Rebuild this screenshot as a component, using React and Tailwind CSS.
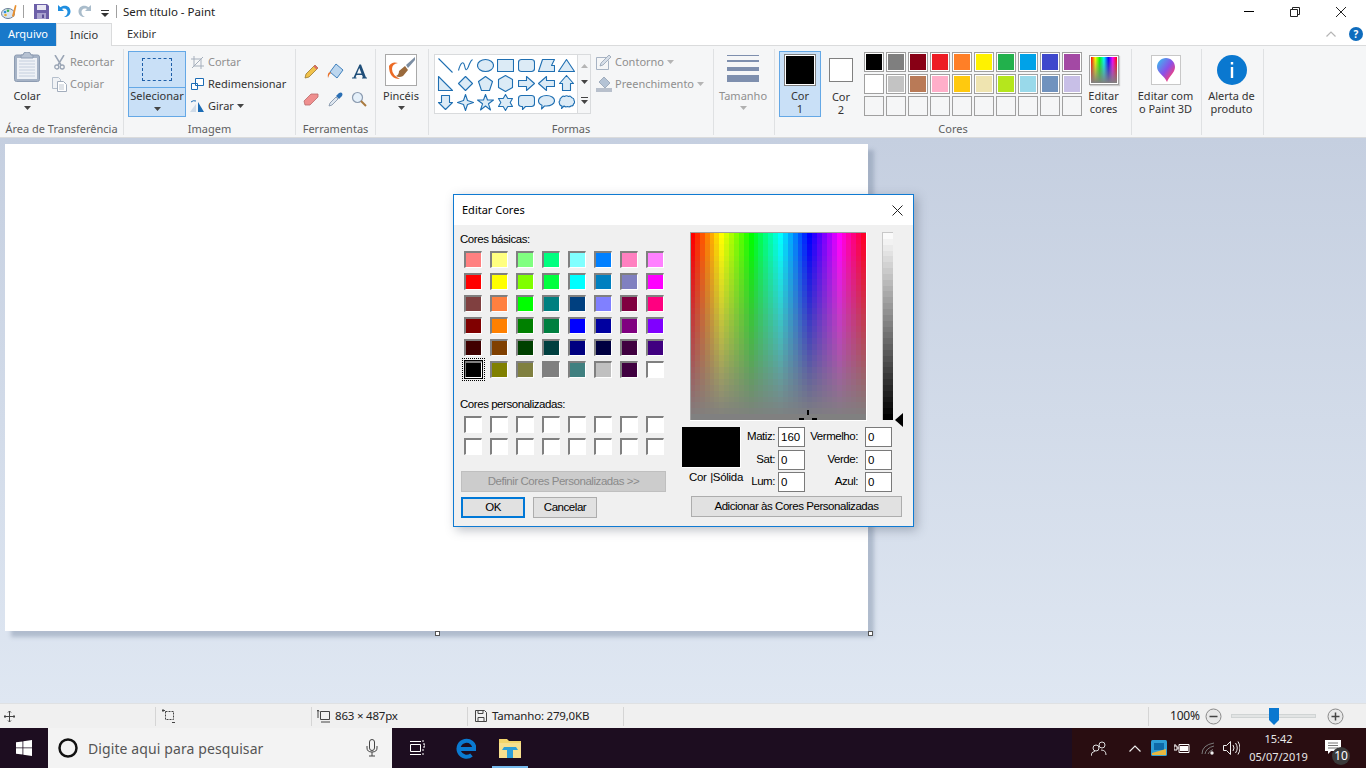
import React from "react";

const UI = "font-['Noto_Sans',sans-serif]";
const DLG = "font-['Liberation_Sans',sans-serif]";

const Arrow = ({ c = "#444", className = "" }) => (
  <svg width="7" height="4" viewBox="0 0 7 4" className={className}><path d="M0 0h7L3.5 4z" fill={c} /></svg>
);

function Group({ w, label, children, pl = 0 }) {
  return (
    <div className="flex shrink-0 h-full" style={{ width: w }}>
      <div className="flex-1 flex flex-col min-w-0" style={{ paddingLeft: pl }}>
        <div className="h-[76px] flex pt-[5px]">{children}</div>
        <div className="text-center text-[11px] leading-[14px] text-[#5f5f5f]">{label}</div>
      </div>
      <div className="w-px h-[86px] mt-[3px] bg-[#dfe1e3]" />
    </div>
  );
}

const SmallRow = ({ icon, text, dis, arrow }) => (
  <div className={`h-[22px] flex items-center gap-[3px] text-[11px] whitespace-nowrap ${dis ? "text-[#8f8f8f]" : "text-[#333]"}`}>
    <span className="w-[16px] h-[16px] flex items-center justify-center shrink-0">{icon}</span>
    <span>{text}</span>
    {arrow && <Arrow c={dis ? "#b5b5b5" : "#444"} />}
  </div>
);

const shapeDefs = [
  "M1 1L15 15",
  "M1 13C3 5 6 3 7 8S9 14 11 9 13 3 15 2",
  "M0 8a8 6 0 1 0 16 0a8 6 0 1 0-16 0z",
  "M0 2h16v12H0z",
  "M3 2h10q3 0 3 3v6q0 3-3 3H3q-3 0-3-3V5q0-3 3-3z",
  "M4 2h12l-3 6h3v6H0z",
  "M8 2l8 12H0z",
  "M1 1l14 14H1z",
  "M8 1l7 7-7 7-7-7z",
  "M8 1l7 5-3 9H4L1 6z",
  "M8 0l7 4v8l-7 4-7-4V4z",
  "M0 5h8V1l8 7-8 7v-4H0z",
  "M16 5H8V1L0 8l8 7v-4h8z",
  "M8 0l7 8h-3v7H4V8H1z",
  "M4 1h8v7h3l-7 7-7-7h3z",
  "M8 0l2 6 6 2-6 2-2 6-2-6-6-2 6-2z",
  "M8 0l2 5.5h6l-5 3.8 2 6.2-5-4-5 4 2-6.2-5-3.8h6z",
  "M8 0l2.3 4H15l-2.3 4 2.3 4h-4.7L8 16l-2.3-4H1l2.3-4L1 4h4.7z",
  "M3 1h10q3 0 3 3v5q0 3-3 3H7l-3 3v-3H3q-3 0-3-3V4q0-3 3-3z",
  "M8 1c4.5 0 8 2.2 8 5.2s-3.5 5.3-8 5.3H6l-3 3 .5-3.7C1.5 10 0 8.3 0 6.2 0 3.2 3.5 1 8 1z",
  "M3 3q1-2 3-1 2-1.5 4 0 2-1 3 1 3 1 2.5 3 1.5 2-.5 3.5 0 2-2.5 2-1.5 1.5-3.5.5-2 1-3.5-.5L3 14l.5-2.5Q1 11 1 9 0 7 1.5 6 1 4 3 3z",
];

function Gallery() {
  return (
    <div className="w-[157px] h-[60px] border border-[#d9dbdd] bg-white flex">
      <div className="w-[142px] grid grid-cols-7 grid-rows-3 py-[1px]">
        {shapeDefs.map((d, i) => (
          <div key={i} className="flex items-center justify-center">
            <svg width="17" height="17" viewBox="-0.5 -0.5 17 17">
              <path d={d} fill={i < 2 ? "none" : "#dcebf6"} stroke="#1f6fb2" strokeWidth="1.1" strokeLinejoin="round" />
            </svg>
          </div>
        ))}
      </div>
      <div className="flex-1 border-l border-[#d9dbdd] bg-[#f5f6f7] flex flex-col items-center justify-around py-[3px]">
        <svg width="7" height="4" viewBox="0 0 7 4"><path d="M0 4h7L3.5 0z" fill="#b5b5b5" /></svg>
        <Arrow c="#444" />
        <svg width="7" height="7" viewBox="0 0 7 7"><path d="M0 0h7v1H0zM0 3h7L3.5 7z" fill="#444" /></svg>
      </div>
    </div>
  );
}

const palette1 = ["#000000", "#7f7f7f", "#880015", "#ed1c24", "#ff7f27", "#fff200", "#22b14c", "#00a2e8", "#3f48cc", "#a349a4"];
const palette2 = ["#ffffff", "#c3c3c3", "#b97a57", "#ffaec9", "#ffc90e", "#efe4b0", "#b5e61d", "#99d9ea", "#7092be", "#c8bfe7"];

function Swatches() {
  const all = [...palette1, ...palette2, ...Array(10).fill(null)];
  return (
    <div className="grid grid-cols-[repeat(10,20px)] grid-rows-[repeat(3,20px)] gap-[2px]">
      {all.map((c, i) => (
        <div key={i} className={`border border-[#a0a0a0] ${c ? "p-px bg-white" : "bg-[#f5f6f7]"}`}>
          {c && <div className="w-full h-full" style={{ background: c }} />}
        </div>
      ))}
    </div>
  );
}

const basic = [
  "#ff8080", "#ffff80", "#80ff80", "#00ff80", "#80ffff", "#0080ff", "#ff80c0", "#ff80ff",
  "#ff0000", "#ffff00", "#80ff00", "#00ff40", "#00ffff", "#0080c0", "#8080c0", "#ff00ff",
  "#804040", "#ff8040", "#00ff00", "#008080", "#004080", "#8080ff", "#800040", "#ff0080",
  "#800000", "#ff8000", "#008000", "#008040", "#0000ff", "#0000a0", "#800080", "#8000ff",
  "#400000", "#804000", "#004000", "#004040", "#000080", "#000040", "#400040", "#400080",
  "#000000", "#808000", "#808040", "#808080", "#408080", "#c0c0c0", "#400040", "#ffffff",
];

const Well = ({ c, sel }) => (
  <div className="relative w-[18px] h-[17px] border-t-2 border-l-2 border-t-[#808080] border-l-[#808080] border-r border-b border-r-white border-b-white" style={{ background: c }}>
    {sel && <div className="absolute -inset-x-[4px] -top-[5px] -bottom-[4px] border border-dotted border-black" />}
    {sel && <div className="absolute -inset-x-[2px] -top-[3px] -bottom-[2px] border border-black" />}
  </div>
);

function Spectrum() {
  const cols = 36, rows = 32;
  const rects = [];
  for (let y = 0; y < rows; y++) {
    for (let x = 0; x < cols; x++) {
      const h = (x / cols) * 360;
      const s = 100 - (y / (rows - 1)) * 100;
      rects.push(<rect key={`${x}-${y}`} x={x * (176 / cols)} y={y * (188 / rows)} width={176 / cols + 0.5} height={188 / rows + 0.5} fill={`hsl(${h} ${s}% 50%)`} />);
    }
  }
  return (
    <svg width="176" height="188" viewBox="0 0 176 188" shapeRendering="crispEdges" className="block">
      {rects}
      <rect x="0" y="0" width="176" height="1" fill="#a0a0a0" />
      <rect x="0" y="0" width="1" height="188" fill="#a0a0a0" />
      <path d="M117 178h2v5h-2zM109 186h5v2h-5zM122 186h5v2h-5z" fill="#000" />
    </svg>
  );
}

function LumBar() {
  const n = 32;
  return (
    <div className="w-[11px] h-[188px] flex flex-col border border-[#c8c8c8] border-b-0 border-r-0">
      {Array.from({ length: n }).map((_, i) => {
        const v = Math.round(250 * (1 - i / (n - 1)));
        return <div key={i} className="flex-1" style={{ background: `rgb(${v},${v},${v})` }} />;
      })}
    </div>
  );
}

const Field = ({ label, value, w }) => (
  <div className="flex items-center h-[20px] justify-end">
    <span className="text-[11.5px] text-black mr-[3px] whitespace-nowrap tracking-[-0.45px]">{label}</span>
    <div className={`${w} h-[20px] border border-[#7a7a7a] bg-white text-[11.5px] leading-[18px] pl-[2px] text-black`}>{value}</div>
  </div>
);

const Btn = ({ children, className = "", dis }) => (
  <div className={`h-[21px] flex items-center justify-center text-[11.5px] tracking-[-0.45px] ${dis ? "bg-[#cccccc] border border-[#bfbfbf] text-[#8a8a8a]" : "bg-[#e1e1e1] border border-[#adadad] text-black"} ${className}`}>{children}</div>
);

function Dialog() {
  return (
    <div className={`absolute left-[453px] top-[194px] w-[461px] h-[333px] border border-[#0f7ad2] bg-[#f0f0f0] shadow-[3px_3px_10px_rgba(60,70,90,0.35)] ${DLG}`}>
      <div className="h-[30px] bg-white flex items-center justify-between pl-[8px] pr-[10px] text-[12px] text-black">
        <span className={`${UI} text-[11px]`}>Editar Cores</span>
        <svg width="11" height="11" viewBox="0 0 11 11"><path d="M.5.5l10 10M10.5.5l-10 10" stroke="#222" strokeWidth="1" /></svg>
      </div>
      <div className="flex pl-[6px] pt-[7px]">
        <div className="w-[222px]">
          <div className="text-[11.5px] leading-[14px] text-black tracking-[-0.45px]">Cores básicas:</div>
          <div className="grid grid-cols-[repeat(8,18px)] auto-rows-[17px] gap-x-[8px] gap-y-[5px] pl-[4px] mt-[5px]">
            {basic.map((c, i) => <Well key={i} c={c} sel={i === 40} />)}
          </div>
          <div className="text-[11.5px] leading-[14px] text-black mt-[19px] tracking-[-0.45px]">Cores personalizadas:</div>
          <div className="grid grid-cols-[repeat(8,18px)] auto-rows-[17px] gap-x-[8px] gap-y-[5px] pl-[4px] mt-[5px]">
            {Array.from({ length: 16 }).map((_, i) => <Well key={i} c="#ffffff" />)}
          </div>
          <Btn dis className="w-[205px] ml-[1px] mt-[16px]">Definir Cores Personalizadas &gt;&gt;</Btn>
          <div className="flex gap-[8px] ml-[1px] mt-[5px]">
            <Btn className="w-[64px] !border-2 !border-[#0078d7]">OK</Btn>
            <Btn className="w-[64px]">Cancelar</Btn>
          </div>
        </div>
        <div className="w-[220px]">
          <div className="flex ml-[8px] h-[189px]">
            <div className="border-r border-b border-white w-[177px] h-[189px]"><Spectrum /></div>
            <div className="ml-[15px]"><LumBar /></div>
            <svg width="8" height="14" viewBox="0 0 8 14" className="ml-[2px] mt-[181px] shrink-0"><path d="M8 0v14L0 7z" fill="#000" /></svg>
          </div>
          <div className="flex mt-[6px]">
            <div className="w-[59px]">
              <div className="w-[59px] h-[41px] bg-black border-r border-b border-white" />
              <div className="text-[11.5px] leading-[14px] text-black mt-[2px] flex justify-between pl-[7px] whitespace-nowrap tracking-[-0.3px]"><span>Cor</span><span className="mr-[-2px]">|Sólida</span></div>
            </div>
            <div className="w-[64px] flex flex-col gap-[2.5px]">
              <Field label="Matiz:" value="160" w="w-[27px]" />
              <Field label="Sat:" value="0" w="w-[27px]" />
              <Field label="Lum:" value="0" w="w-[27px]" />
            </div>
            <div className="w-[87px] flex flex-col gap-[2.5px]">
              <Field label="Vermelho:" value="0" w="w-[27px] ml-[4px]" />
              <Field label="Verde:" value="0" w="w-[27px] ml-[4px]" />
              <Field label="Azul:" value="0" w="w-[27px] ml-[4px]" />
            </div>
          </div>
          <Btn className="w-[211px] ml-[9px] mt-[4px]">Adicionar às Cores Personalizadas</Btn>
        </div>
      </div>
    </div>
  );
}

const Handle = ({ className }) => <div className={`absolute w-[5px] h-[5px] border border-[#555] bg-white ${className}`} />;

const TitleBar = () => (
  <div className="h-[23px] bg-white flex items-center text-[11.5px] text-[#222]">
    <svg width="16" height="16" viewBox="0 0 16 16" className="ml-[1px]">
      <ellipse cx="7" cy="9.5" rx="6.5" ry="5" fill="#d8e4f0" stroke="#6b7f99" />
      <circle cx="4" cy="8" r="1.3" fill="#2f8fd8" /><circle cx="7" cy="6.8" r="1.3" fill="#3fb24f" /><circle cx="4.5" cy="11" r="1.3" fill="#e8b030" />
      <path d="M11 12L14 1l1.5.5L13 13z" fill="#e89030" />
    </svg>
    <div className="w-px h-[13px] bg-[#a0a0a0] ml-[6px]" />
    <svg width="15" height="15" viewBox="0 0 15 15" className="ml-[10px]">
      <path d="M0 0h13l2 2v13H0z" fill="#6c5fa8" /><path d="M3 1h9v5H3z" fill="#e8e6f2" /><path d="M3 9h9v6H3z" fill="#a9a2cf" /><path d="M8 10.5h2V14H8z" fill="#5b4f96" />
    </svg>
    <svg width="14" height="15" viewBox="0 0 14 15" className="ml-[8px]">
      <path d="M1 1v6h6L5 5c3-1.5 6 .5 5.5 3.5-.3 2-1.5 3.5-3.5 4.5 4 .5 6.5-2.5 6.5-5.5C13.500 3 9 0 3.500 3.200z" fill="#1f8ee0" />
    </svg>
    <svg width="14" height="15" viewBox="0 0 14 15" className="ml-[7px]">
      <path d="M13 1v6H7l2-2C6 3.500 3 5.500 3.500 8.500c.3 2 1.500 3.500 3.500 4.500C3 13.500.5 10.500.5 7.500.5 3 5 0 10.500 3.200z" fill="#a9bccb" />
    </svg>
    <svg width="8" height="8" viewBox="0 0 8 8" className="ml-[9px] mt-[3px]"><path d="M0 1h8v1H0zM0 4h8L4 8z" fill="#333" /></svg>
    <div className="w-px h-[13px] bg-[#a0a0a0] ml-[7px]" />
    <span className="ml-[7px] -translate-x-px">Sem título - Paint</span>
    <div className="ml-auto flex items-center">
      <div className="w-[10px] h-px bg-black mr-[36px]" />
      <svg width="10" height="10" viewBox="0 0 10 10" className="mr-[36px]"><path d="M.5 2.5h7v7h-7zM2.5 2.5v-2h7v7h-2" fill="none" stroke="#222" /></svg>
      <svg width="10" height="10" viewBox="0 0 10 10" className="mr-[20px]"><path d="M0 0l10 10M10 0L0 10" stroke="#222" /></svg>
    </div>
  </div>
);

const Tabs = () => (
  <div className="h-[23px] bg-white flex text-[11px] relative border-b border-[#dadbdc]">
    <div className="w-[56px] h-[23px] bg-[#1979ca] text-white flex items-center justify-center">Arquivo</div>
    <div className="w-[56px] h-[23px] bg-[#f5f6f7] border border-b-0 border-[#dadbdc] text-[#333] flex items-center justify-center">Início</div>
    <div className="ml-[15px] flex items-center text-[#333]">Exibir</div>
    <div className="ml-auto flex items-center pr-[3px]">
      <svg width="10" height="6" viewBox="0 0 10 6" className="mr-[13px]"><path d="M.5 5.500L5 1l4.500 4.500" fill="none" stroke="#b5b5b5" strokeWidth="1.2" /></svg>
      <div className="w-[14px] h-[14px] rounded-full bg-[#0f6cbd] text-white text-[10px] font-bold leading-[14px] text-center">?</div>
    </div>
  </div>
);

const Ribbon = () => (
  <div className="h-[92px] bg-[#f5f6f7] border-b border-[#dadbdc] flex text-[#333]">
    <Group w={124} label="Área de Transferência">
      <div className="w-[54px] -mr-[3px] flex flex-col items-center">
        <svg width="26" height="30" viewBox="0 0 26 30" className="mt-[1px]">
          <rect x="0.5" y="3" width="25" height="26.5" rx="2" fill="#a6b3c6" stroke="#8d9cb2" />
          <rect x="3" y="6" width="20" height="21" fill="#eef1f6" />
          <path d="M5 9h16M5 12h16M5 15h16M5 18h16M5 21h16M5 24h16" stroke="#c4cedd" />
          <path d="M9 3q0-3 4-3t4 3h2v3H7V3z" fill="#b6c1d1" stroke="#8d9cb2" />
        </svg>
        <div className="text-[11px] leading-[14px] mt-[7px]">Colar</div>
        <Arrow className="mt-[3px]" />
      </div>
      <div className="flex flex-col">
        <SmallRow dis text="Recortar" icon={<svg width="11" height="15" viewBox="0 0 11 15"><path d="M1 0l6 10M10 0L4 10" stroke="#9aa5b5" strokeWidth="1.5" /><circle cx="2.8" cy="12" r="2" fill="none" stroke="#9aa5b5" strokeWidth="1.3" /><circle cx="8.2" cy="12" r="2" fill="none" stroke="#9aa5b5" strokeWidth="1.3" /></svg>} />
        <SmallRow dis text="Copiar" icon={<svg width="15" height="15" viewBox="0 0 15 15"><path d="M.5.5h6l2 2v9h-8z" fill="#f0f2f5" stroke="#b5bfcc" /><path d="M5.5 4.5h6l3 3v7h-9z" fill="#fff" stroke="#a2adbc" /><path d="M7 8h5M7 10h5M7 12h5" stroke="#c0c8d2" /></svg>} />
      </div>
    </Group>
    <Group w={172} label="Imagem">
      <div className="w-[58px] h-[66px] ml-[4px] border border-[#64a8e6] bg-[#c9e0f7] flex flex-col items-center">
        <div className="h-[36px] w-full border-b border-[#64a8e6] flex items-center justify-center">
          <div className="w-[30px] h-[23px] border border-dashed border-[#1e5ea8] mt-[-1px]" />
        </div>
        <div className="text-[11px] leading-[14px] mt-[1px] whitespace-nowrap">Selecionar</div>
        <Arrow className="mt-[4px]" />
      </div>
      <div className="flex flex-col ml-[3px]">
        <SmallRow dis text="Cortar" icon={<svg width="13" height="13" viewBox="0 0 13 13"><path d="M3 0v10h10M0 3h10v10M1 12L12 1" fill="none" stroke="#a5afbc" /></svg>} />
        <SmallRow text="Redimensionar" icon={<svg width="13" height="12" viewBox="0 0 13 12"><path d="M4.5.5h8v7h-8zM.5 5.5h6v6h-6z" fill="#fff" stroke="#1c6cb5" /></svg>} />
        <SmallRow arrow text="Girar" icon={<svg width="16" height="14" viewBox="0 0 16 14"><path d="M9 3l6 10H9z" fill="#1c6cb5" /><path d="M7 5v8H1z" fill="#cfdbe8" /><path d="M2 3q2-2 5-1" fill="none" stroke="#1c6cb5" /></svg>} />
      </div>
    </Group>
    <Group w={80} label="Ferramentas">
      <div className="grid grid-cols-[repeat(3,24px)] grid-rows-[28px_28px] place-items-center ml-[3px] mt-[6px]">
        <svg width="15" height="15" viewBox="0 0 15 15"><path d="M1 14l1-4L11 1l3 3-9 9z" fill="#f1c24b" stroke="#9b7a2f" strokeWidth=".8" /><path d="M11 1l3 3-1.5 1.5-3-3z" fill="#d96a6a" /></svg>
        <svg width="17" height="17" viewBox="0 0 17 17"><path d="M9 1l7 6-6 8-7-6z" fill="#bcd6ee" stroke="#3f80bd" /><path d="M3 9Q0 10 1 15q1-4 3-5z" fill="#e8702a" /></svg>
        <svg width="15" height="15" viewBox="0 0 15 15"><path d="M0 14.5h4.5v-1H3.5L4.5 11h5.500l1 2.500H10v1h5v-1h-1L9 .5H7.500L1.500 13.500H0zM5 9.500L7.300 4l2.200 5.500z" fill="#1f4e79" /></svg>
        <svg width="16" height="13" viewBox="0 0 16 13"><path d="M1 8l7-7h7v3l-8 8H2z" fill="#ef8f8f" stroke="#b96a6a" strokeWidth=".8" /></svg>
        <svg width="15" height="15" viewBox="0 0 15 15"><path d="M1 14l1-3 6-6 2 2-6 6z" fill="#dfe7f0" stroke="#7b8ea5" strokeWidth=".8" /><path d="M8 4l3-3q2-1 3 0t0 3l-3 3z" fill="#2b6fb4" /></svg>
        <svg width="16" height="16" viewBox="0 0 16 16"><circle cx="6.5" cy="6.5" r="5" fill="#e5f0fa" stroke="#8b9bb0" strokeWidth="1.2" /><path d="M10 10l5 5" stroke="#a97a3f" strokeWidth="2" /></svg>
      </div>
    </Group>
    <Group w={53} label="">
      <div className="w-full flex flex-col items-center -ml-[1px]">
        <svg width="32" height="32" viewBox="0 0 32 32" className="mt-[3px]">
          <rect x=".5" y=".5" width="31" height="31" fill="#fff" stroke="#a9a9a9" />
          <path d="M4 12q3-5 9-3-6 1-6 6 0 6 8 10-11 0-11-13z" fill="#ec6a24" />
          <path d="M14 17l6-5 3 4-5 6q-4 2-7 0 3-1 3-5z" fill="#9a6a3c" />
          <path d="M21 11L30 3v3l-7 8z" fill="#7c8ea3" />
        </svg>
        <div className="text-[11px] leading-[14px] mt-[3px]">Pincéis</div>
        <Arrow className="mt-[3px]" />
      </div>
    </Group>
    <Group w={285} label="Formas">
      <div className="ml-[5px] mt-[3px] shrink-0"><Gallery /></div>
      <div className="flex flex-col ml-[5px]">
        <SmallRow dis arrow text="Contorno" icon={<svg width="16" height="16" viewBox="0 0 16 16"><path d="M.5 3.5h10M.5 3.5v12h12v-9" fill="none" stroke="#a7b3c3" /><path d="M4 12l1-3 8-8 2 2-8 8z" fill="#d7dfe9" stroke="#93a1b3" strokeWidth=".8" /></svg>} />
        <SmallRow dis arrow text="Preenchimento" icon={<svg width="16" height="16" viewBox="0 0 16 16"><path d="M8 1l6 6-5 5-6-6z" fill="#b4c3d5" stroke="#93a1b3" strokeWidth=".8" /><path d="M0 12h16v4H0z" fill="#b8c0cc" /></svg>} />
      </div>
    </Group>
    <Group w={61} label="">
      <div className="w-full flex flex-col items-center -ml-[1px]">
        <div className="w-[32px] flex flex-col mt-[4px]">
          <div className="h-px bg-[#7e8fae]" />
          <div className="h-[2px] bg-[#7e8fae] mt-[4px]" />
          <div className="h-[4px] bg-[#7e8fae] mt-[5px]" />
          <div className="h-[7px] bg-[#7e8fae] mt-[4px]" />
        </div>
        <div className="text-[11px] leading-[14px] mt-[7px] text-[#8f8f8f]">Tamanho</div>
        <Arrow c="#b0b0b0" className="mt-[3px]" />
      </div>
    </Group>
    <Group w={357} label="Cores">
      <div className="w-[42px] h-[66px] ml-[4px] border border-[#64a8e6] bg-[#c9e0f7] flex flex-col items-center shrink-0 text-[11px] leading-[13px]">
        <div className="w-[32px] h-[32px] bg-black border border-[#808080] outline outline-white -outline-offset-2 mt-[2px]" />
        <div className="mt-[3px]">Cor</div>
        <div>1</div>
      </div>
      <div className="w-[40px] flex flex-col items-center shrink-0 text-[11px] leading-[13px]">
        <div className="w-[24px] h-[24px] bg-white border border-[#808080] mt-[7px]" />
        <div className="mt-[8px]">Cor</div>
        <div>2</div>
      </div>
      <div className="ml-[3px] mt-[1px] shrink-0"><Swatches /></div>
      <div className="w-[43px] flex flex-col items-center shrink-0 text-[11px] leading-[13px]">
        <div className="w-[30px] h-[30px] border border-[#a0a0a0] p-px bg-white mt-[4px] shadow-[1px_1px_1px_#ccc]">
          <div className="w-full h-full bg-[linear-gradient(to_bottom,transparent,#808080),linear-gradient(to_right,#f00,#ff0,#0f0,#0ff,#00f,#f0f,#f00)]" />
        </div>
        <div className="mt-[4px]">Editar</div>
        <div>cores</div>
      </div>
    </Group>
    <Group w={70} label="">
      <div className="w-full flex flex-col items-center text-[11px] leading-[13px] whitespace-nowrap -ml-[1px]">
        <div className="w-[30px] h-[30px] border border-[#c8c8c8] bg-white flex items-center justify-center mt-[4px]">
          <svg width="20" height="26" viewBox="0 0 20 26">
            <defs><linearGradient id="p3d" x1="0" y1="0" x2="1" y2="1"><stop offset="0" stopColor="#30c8f0" /><stop offset=".5" stopColor="#8a50e8" /><stop offset=".8" stopColor="#f04080" /><stop offset="1" stopColor="#f8a020" /></linearGradient></defs>
            <path d="M10 1c5 0 9 4 9 9 0 6-6 9-8 15C9 19 1 16 1 10c0-5 4-9 9-9z" fill="url(#p3d)" />
          </svg>
        </div>
        <div className="mt-[4px]">Editar com</div>
        <div>o Paint 3D</div>
      </div>
    </Group>
    <Group w={62} label="">
      <div className="w-full flex flex-col items-center text-[11px] leading-[13px] whitespace-nowrap -ml-[1px]">
        <svg width="30" height="30" viewBox="0 0 30 30" className="mt-[4px]">
          <circle cx="15" cy="15" r="15" fill="#0a78d0" />
          <path d="M13.8 7h2.4v2.4h-2.400zM13.800 12h2.400v11h-2.400z" fill="#fff" />
        </svg>
        <div className="mt-[4px]">Alerta de</div>
        <div>produto</div>
      </div>
    </Group>
    <div className="flex-1" />
  </div>
);

const StatusBar = () => (
  <div className="h-[25px] bg-[#f0f0f0] border-t border-[#dfe1e3] flex items-center text-[11.5px] text-[#222] tracking-[-0.2px]">
    <div className="w-[156px] h-[19px] border-r border-[#d5d5d5] flex items-center pl-[4px]">
      <svg width="11" height="11" viewBox="0 0 11 11"><path d="M5.5 0v11M0 5.5h11M4 1.5L5.5 0 7 1.5M4 9.5L5.5 11 7 9.5M1.5 4L0 5.5 1.5 7M9.5 4L11 5.5 9.5 7" fill="none" stroke="#444" /></svg>
    </div>
    <div className="w-[156px] h-[19px] border-r border-[#d5d5d5] flex items-center pl-[6px]">
      <svg width="14" height="14" viewBox="0 0 14 14"><path d="M3.5 2.5h8v8h-8z" fill="none" stroke="#444" strokeDasharray="2 1" /><path d="M1 0v3M0 1.5h3M10 13.5h3" stroke="#444" /></svg>
    </div>
    <div className="w-[156px] h-[19px] border-r border-[#d5d5d5] flex items-center pl-[5px] gap-[4px]">
      <svg width="14" height="14" viewBox="0 0 14 14"><path d="M3.5 2.5h9v8h-9z" fill="none" stroke="#444" /><path d="M1 1v8M0 2.5L1 1l1 1.5M4 13h9" stroke="#444" fill="none" /></svg>
      <span>863 × 487px</span>
    </div>
    <div className="w-[156px] h-[19px] border-r border-[#d5d5d5] flex items-center pl-[7px] gap-[5px]">
      <svg width="12" height="12" viewBox="0 0 12 12"><path d="M.5.5h9l2 2v9H.5z" fill="none" stroke="#444" /><path d="M3 .5v3h5v-3M3 11.5v-4h6v4" fill="none" stroke="#444" /></svg>
      <span>Tamanho: 279,0KB</span>
    </div>
    <div className="w-[525px] h-[19px] border-r border-[#d5d5d5]" />
    <span className="ml-[21px] text-[12px] w-[30px]">100%</span>
    <svg width="17" height="17" viewBox="0 0 17 17" className="ml-[5px]"><circle cx="8.5" cy="8.5" r="7.5" fill="#e8e8e8" stroke="#8a8a8a" /><path d="M4.5 8.5h8" stroke="#444" strokeWidth="1.5" /></svg>
    <div className="ml-[9px] w-[85px] h-[4px] bg-[#e2e4e4] border border-[#d0d4d4] relative">
      <svg width="10" height="17" viewBox="0 0 10 17" className="absolute left-[37px] -top-[7px]"><path d="M0 0h10v12l-5 5-5-5z" fill="#0a78d0" /></svg>
    </div>
    <svg width="17" height="17" viewBox="0 0 17 17" className="ml-[11px]"><circle cx="8.5" cy="8.5" r="7.5" fill="#e8e8e8" stroke="#8a8a8a" /><path d="M4.5 8.5h8M8.5 4.5v8" stroke="#444" strokeWidth="1.5" /></svg>
  </div>
);

const Taskbar = () => (
  <div className="h-[40px] bg-[#1d0d20] flex items-center text-white">
    <div className="w-[48px] flex justify-center">
      <svg width="16" height="16" viewBox="0 0 16 16"><path d="M0 2.3L6.5 1.4v6.1H0zM7.3 1.3L16 0v7.5H7.3zM0 8.3h6.5v6.3L0 13.700zM7.300 8.300H16V16l-8.700-1.200z" fill="#fff" /></svg>
    </div>
    <div className={`w-[344px] h-[40px] bg-[#f3f3f3] flex items-center text-[14px] text-[#555] ${UI}`}>
      <svg width="22" height="22" viewBox="0 0 22 22" className="ml-[9px]"><circle cx="11" cy="11" r="8.5" fill="none" stroke="#111" strokeWidth="2.5" /></svg>
      <span className="ml-[9px] tracking-[0.1px]">Digite aqui para pesquisar</span>
      <svg width="12" height="18" viewBox="0 0 12 18" className="ml-auto mr-[14px]"><rect x="3.5" y=".5" width="5" height="11" rx="2.5" fill="none" stroke="#444" /><path d="M1 7v2q0 4 5 4t5-4V7M6 13v4M3 17h6" fill="none" stroke="#444" /></svg>
    </div>
    <svg width="16" height="16" viewBox="0 0 16 16" className="ml-[17px]"><path d="M1.5 4.5h10v7h-10zM1 1.5h11M1 14.5h11M14 0v2M14 4h2v3h-2M14 9v2M14 13v2" fill="none" stroke="#fff" /></svg>
    <svg width="20" height="21" viewBox="0 0 20 21" className="ml-[31px]"><path d="M3 11h15.500A8 8 0 1 0 15.500 17" fill="none" stroke="#0a7ad1" strokeWidth="4" /></svg>
    <div className="ml-[16px] w-[36px] h-[40px] flex flex-col items-center justify-end relative">
      <svg width="22" height="20" viewBox="0 0 22 20" className="mb-[10px]"><path d="M0 1h8l2 2h12v17H0z" fill="#f3d56b" /><path d="M0 5h22v15H0z" fill="#f7e08e" /><path d="M5 9h12l2 3H3z" fill="#2d9fd8" /><path d="M8 12h6v8H8z" fill="#2d9fd8" /></svg>
      <div className="absolute bottom-0 left-0 w-full h-[2px] bg-[#76b9ed]" />
    </div>
    <div className={`ml-auto w-[294px] h-[40px] bg-[#290d11] flex items-center relative ${UI}`}>
      <svg width="16" height="16" viewBox="0 0 16 16" className="ml-[19px]"><circle cx="5" cy="8" r="3" fill="none" stroke="#ddd" /><circle cx="11" cy="5" r="3" fill="none" stroke="#ddd" /><path d="M0 16q0-4 4-5M10 10q5 0 5 5" fill="none" stroke="#ddd" /></svg>
      <svg width="12" height="7" viewBox="0 0 12 7" className="ml-[22px]"><path d="M.5 6.500L6 1l5.500 5.500" fill="none" stroke="#eee" strokeWidth="1.2" /></svg>
      <svg width="16" height="16" viewBox="0 0 16 16" className="ml-[10px]"><rect width="16" height="16" rx="1.5" fill="#2f9fd6" /><path d="M3 3h10v7H3z" fill="#0e6aa8" /><path d="M1 13l14-4v6H1z" fill="#e8b840" /></svg>
      <svg width="16" height="11" viewBox="0 0 16 11" className="ml-[7px]"><path d="M5 1.5h10v8H5z" fill="none" stroke="#fff" /><path d="M6 3h8v5H6z" fill="#fff" /><path d="M0 3h3v4H0zM1 1v2M3 5h2" stroke="#fff" fill="none" /></svg>
      <svg width="15" height="13" viewBox="0 0 15 13" className="ml-[11px]"><path d="M1 12Q1 3 13 1M4 12Q5 6 13 4M7 12Q8 9 12 7.5" fill="none" stroke="#7a7a7a" /><circle cx="11" cy="11" r="1.7" fill="#eee" /></svg>
      <svg width="17" height="14" viewBox="0 0 17 14" className="ml-[7px]"><path d="M.5 4.5h3l4-4v13l-4-4h-3z" fill="none" stroke="#eee" /><path d="M10 4q2 3 0 6M12.5 2q3.500 5 0 10M15 .5q4 6.500 0 13" fill="none" stroke="#eee" /></svg>
      <div className="w-[77px] text-center text-[11px] leading-[18px] text-[#e8e8e8]">
        <div>15:42</div>
        <div>05/07/2019</div>
      </div>
      <div className="relative ml-[8px] w-[24px] h-[24px]">
        <svg width="16" height="15" viewBox="0 0 16 15" className="absolute left-0 top-[4px]"><path d="M0 0h16v11H6l-3 3v-3H0z" fill="#fff" /><path d="M3 3h10M3 5.5h10M3 8h10" stroke="#777" /></svg>
        <div className="absolute left-[7px] top-[11px] w-[18px] h-[18px] rounded-full bg-[#3a3a3a] text-[12px] leading-[18px] text-center text-white">10</div>
      </div>
    </div>
  </div>
);

export default function App() {
  return (
    <div className={`relative w-[1366px] h-[768px] overflow-hidden flex flex-col ${UI}`}>
      <TitleBar />
      <Tabs />
      <Ribbon />
      <div className="flex-1 bg-[linear-gradient(to_bottom,#c5cfe0,#dfe7f2)] pl-[5px] pt-[6px]">
        <div className="relative w-[863px] h-[487px] bg-white shadow-[6px_6px_4px_rgba(125,140,165,0.45)]">
          <Handle className="left-[430px] top-[487px]" />
          <Handle className="left-[863px] top-[487px]" />
        </div>
      </div>
      <StatusBar />
      <Taskbar />
      <Dialog />
    </div>
  );
}
